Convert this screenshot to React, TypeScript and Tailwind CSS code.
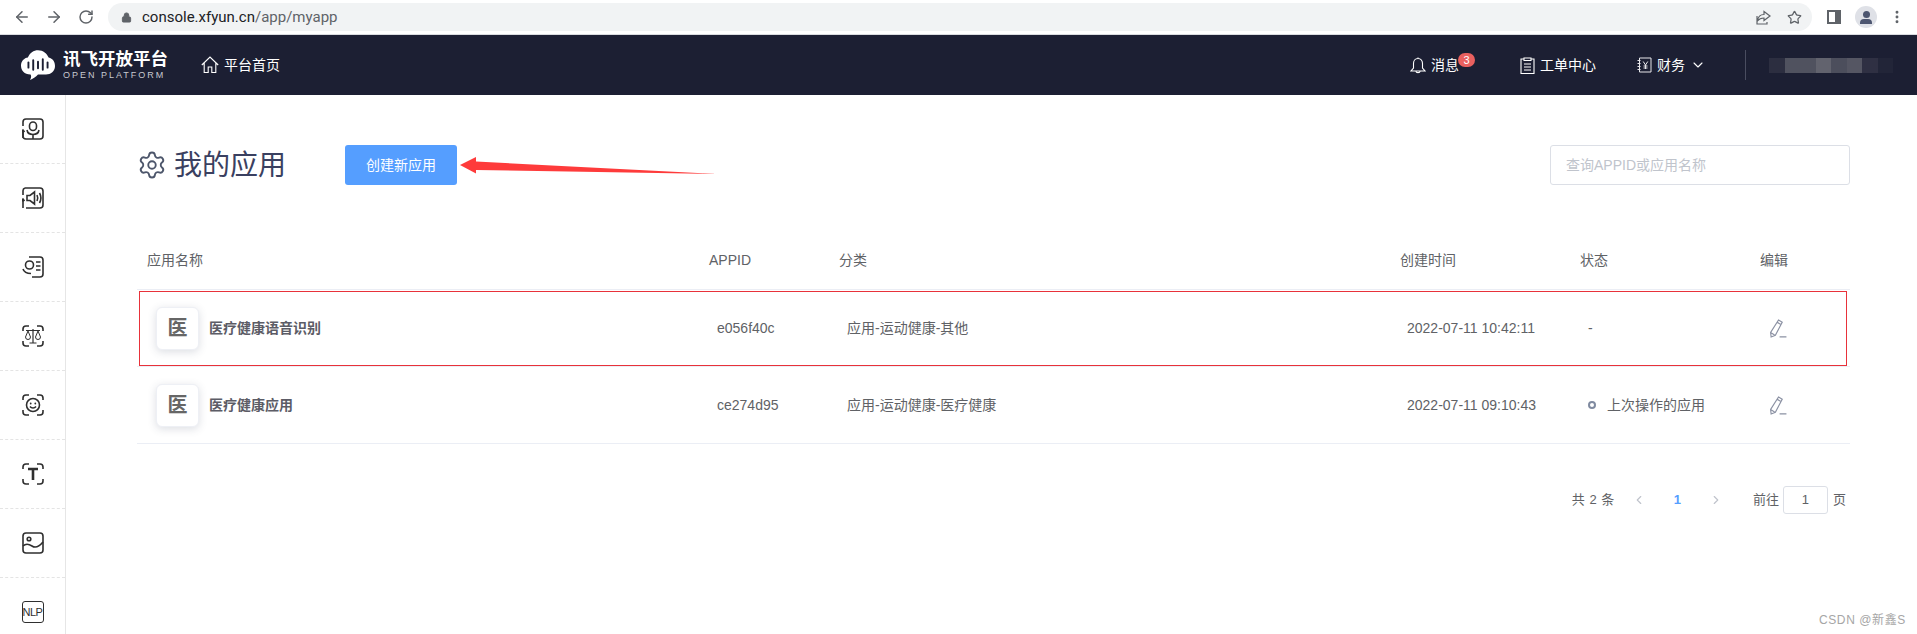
import { ArrowLeft, ArrowRight, RotateCw, Lock, Star, MoreVertical, ChevronDown, ChevronLeft, ChevronRight, Settings } from 'lucide-react';

const COLS = 'grid grid-cols-[562px_130px_561px_180px_180px_100px]';

function Cloud() {
  return (
    <svg width="38" height="34" viewBox="0 0 34 32" className="shrink-0">
      <path d="M10 25 C4 25 1 21 1 16.5 C1 12.5 4 9.5 7.5 9 C9 4.5 13 2 17 2 C22 2 25.5 5 27 9 C31 10 33 13 33 17 C33 22 29 25 24.5 25 L17 25 C15 27 12 29.5 9.5 30 C10.5 28.5 11 26.5 10 25 Z" fill="#fff" />
      <g stroke="#1c1f33" strokeWidth="1.8" strokeLinecap="round">
        <path d="M8 13.5v5M12.5 11.5v9M17 13v6M21.5 10.5v10M26 13.5v5" />
      </g>
    </svg>
  );
}

const iconProps = { width: 22, height: 22, viewBox: '0 0 22 22', fill: 'none', stroke: '#2f2f2f', strokeWidth: 1.6 };

function IconAsr() {
  return (
    <svg {...iconProps}>
      <path d="M4 1h14a3 3 0 0 1 3 3v14a3 3 0 0 1-3 3H4a3 3 0 0 1-3-3v-5" />
      <path d="M1 8V4a3 3 0 0 1 3-3" />
      <path d="M1 20v-8M-0.5 14L1 12l1.5 2" />
      <rect x="7.5" y="4" width="7" height="8.5" rx="3.5" />
      <path d="M5 12c.5 3 3 4.5 6 4.5s5.5-1.5 6-4.5M11 16.5V21" />
    </svg>
  );
}

function IconTts() {
  return (
    <svg {...iconProps}>
      <path d="M3 1h15a3 3 0 0 1 3 3v14a3 3 0 0 1-3 3H4" />
      <path d="M1 21v-9M-0.5 14L1 12l1.5 2M1 8V4a3 3 0 0 1 2-3" />
      <path d="M5 8.5h3L12.5 5v12L8 13.5H5z" />
      <path d="M15 8c1 2 1 4 0 6M17.5 6c1.7 3 1.7 7 0 10" />
    </svg>
  );
}

function IconRead() {
  return (
    <svg {...iconProps}>
      <path d="M7 1h11a3 3 0 0 1 3 3v14a3 3 0 0 1-3 3H10" />
      <circle cx="7.5" cy="9" r="4" />
      <path d="M1 13c1 3 4 4.5 8 4.5M14 6h4.5M14 10h4.5M14 14h4.5" />
    </svg>
  );
}

function Corners({ children }: { children: React.ReactNode }) {
  return (
    <svg {...iconProps}>
      <path d="M1 6V4a3 3 0 0 1 3-3h3M15 1h3a3 3 0 0 1 3 3v2M21 16v2a3 3 0 0 1-3 3h-3M7 21H4a3 3 0 0 1-3-3v-2" />
      {children}
    </svg>
  );
}

function IconScale() {
  return (
    <Corners>
      <path d="M4 5.500h14M11 4v14M7.500 18h7" strokeWidth="1.2" />
      <path d="M6 6l-2.500 6a2.500 2.500 0 0 0 5 0zM16 6l-2.500 6a2.500 2.500 0 0 0 5 0z" strokeWidth="1" />
    </Corners>
  );
}

function IconFace() {
  return (
    <Corners>
      <circle cx="11" cy="11" r="6.500" />
      <circle cx="8.700" cy="9.500" r=".9" fill="#2f2f2f" stroke="none" />
      <circle cx="13.300" cy="9.500" r=".9" fill="#2f2f2f" stroke="none" />
      <path d="M8 12.500c1.500 2 4.500 2 6 0" />
    </Corners>
  );
}

function IconText() {
  return (
    <Corners>
      <path d="M6 6h10M11 6v11" strokeWidth="2.600" />
    </Corners>
  );
}

function IconImage() {
  return (
    <svg {...iconProps}>
      <rect x="1" y="1" width="20" height="20" rx="3" />
      <circle cx="7" cy="7" r="1.800" />
      <path d="M1 14c3-3 6-2 9 0s6 2 11-4" />
    </svg>
  );
}

function IconNlp() {
  return (
    <div className="w-[22px] h-[22px] border-[1.500px] border-[#2f2f2f] rounded-[3px] flex items-center justify-center text-[11px] text-[#2f2f2f] tracking-[-0.5px] leading-none">
      NLP
    </div>
  );
}

function IconHome() {
  return (
    <svg width="18" height="18" viewBox="0 0 18 18" fill="none" stroke="#fff" strokeWidth="1.100">
      <path d="M.8 9L9 1l8.200 8M3.200 7v9.500h4V11h3.600v5.500h4V7" />
    </svg>
  );
}

function IconBell() {
  return (
    <svg width="16" height="17" viewBox="0 0 16 17" fill="none" stroke="#fff" strokeWidth="1.100">
      <path d="M8 1.500c-3 0-4.500 2.300-4.500 5v4.500L1 14h14l-2.500-3V6.500c0-2.700-1.500-5-4.500-5zM6 14.500c0 1.500 4 1.500 4 0M8 .5v1" />
    </svg>
  );
}

function IconTicket() {
  return (
    <svg width="15" height="17" viewBox="0 0 15 17" fill="none" stroke="#fff" strokeWidth="1.100">
      <path d="M4 2H1v14.500h13V2h-3M4 1h7v2.500H4zM4 7h7M4 10h7M4 13h7" />
    </svg>
  );
}

function IconFinance() {
  return (
    <svg width="15" height="16" viewBox="0 0 15 16" fill="none" stroke="#e6e6ea" strokeWidth="1">
      <path d="M2.500 1H14v14H2.500zM.5 3.500h3M.5 6.500h3M.5 9.500h3M.5 12.500h3" />
      <path d="M6.200 4.500L8.500 8l2.300-3.500M8.500 8v4M6.500 9h4M6.500 11h4" />
    </svg>
  );
}

function IconEdit() {
  return (
    <svg width="18" height="19" viewBox="0 0 17 18" fill="none" stroke="#8b91a3" strokeWidth="1.100">
      <path d="M9 1l3.500 2L6 15.500 2 17l-.5-4.300zM7.800 3.200l3.500 2M1.800 13l3.500 2.200M10 17h6.500" />
    </svg>
  );
}

const rows = [
  { name: '医疗健康语音识别', appid: 'e056f40c', cat: '应用-运动健康-其他', time: '2022-07-11 10:42:11', status: '-', marked: true },
  { name: '医疗健康应用', appid: 'ce274d95', cat: '应用-运动健康-医疗健康', time: '2022-07-11 09:10:43', status: '上次操作的应用', marked: false },
];

const blurBlocks = ['#2c2e40', '#50525f', '#50525f', '#62636e', '#4c4e5c', '#555663', '#2f3043', '#222538'];

export default function App() {
  return (
    <div className="relative w-[1917px] h-[634px] overflow-hidden bg-white text-[14px] text-[#606266] [font-family:'Liberation_Sans','Noto_Sans_CJK_SC',sans-serif]">
      {/* Browser bar */}
      <div className="h-[35px] bg-white border-b border-[#dadce0] flex items-center pl-[13px] pr-[12px]">
        <ArrowLeft size={18} color="#5f6368" strokeWidth={2} />
        <ArrowRight size={18} color="#5f6368" strokeWidth={2} className="ml-[14px]" />
        <RotateCw size={16} color="#5f6368" strokeWidth={2.200} className="ml-[15px]" />
        <div className="ml-[14px] flex-1 h-[28px] rounded-full bg-[#f1f3f4] flex items-center pl-[13px] pr-[10px]">
          <Lock size={11} color="#5f6368" fill="#5f6368" />
          <span className="ml-[10px] text-[15px] text-[#202124] [font-family:Roboto,sans-serif]">
            console.xfyun.cn<span className="text-[#5f6368]">/app/myapp</span>
          </span>
          <div className="ml-auto flex items-center gap-[16px]">
            <svg width="15" height="15" viewBox="0 0 15 15" fill="none" stroke="#5f6368" strokeWidth="1.200">
              <path d="M8 1.500l6 4.500-6 4.500V8C5 8 3 9 1.500 11 2 7 4.500 4.500 8 4.500zM1 6v8h10v-2" />
            </svg>
            <Star size={15} color="#5f6368" strokeWidth={2} />
          </div>
        </div>
        <div className="ml-[15px] w-[14px] h-[14px] border-[2px] border-[#5f6368] border-r-[6px] bg-white" />
        <div className="ml-[14px] w-[22px] h-[22px] rounded-full bg-[#dfe1e7] flex flex-col items-center justify-center overflow-hidden">
          <div className="w-[7px] h-[7px] rounded-full bg-[#4d5670]" />
          <div className="mt-[1px] w-[12px] h-[5px] rounded-t-[4px] bg-[#4d5670]" />
        </div>
        <MoreVertical size={16} color="#5f6368" strokeWidth={2.400} className="ml-[12px]" />
      </div>

      {/* Top nav */}
      <div className="h-[60px] bg-[#1c1f33] flex items-center text-white">
        <div className="ml-[19px] flex items-center">
          <Cloud />
          <div className="ml-[6px] flex flex-col">
            <span className="text-[17.500px] font-bold leading-[18px]">讯飞开放平台</span>
            <span className="text-[9px] leading-[10px] tracking-[2px] text-[#c8c9d0] mt-[2px]">OPEN PLATFORM</span>
          </div>
        </div>
        <div className="ml-[33px] flex items-center gap-[5px]">
          <IconHome />
          <span>平台首页</span>
        </div>
        <div className="ml-auto flex items-center">
          <IconBell />
          <span className="ml-[5px]">消息</span>
          <span className="relative -top-[5px] -ml-[1px] w-[17px] h-[14px] rounded-full bg-[#e9605f] text-[11px] leading-[14px] text-center">3</span>
          <div className="ml-[45px]"><IconTicket /></div>
          <span className="ml-[5px]">工单中心</span>
          <div className="ml-[41px]"><IconFinance /></div>
          <span className="ml-[5px]">财务</span>
          <ChevronDown size={16} color="#fff" strokeWidth={1.600} className="ml-[5px]" />
          <div className="ml-[39px] w-px h-[30px] bg-[#4a4d60]" />
          <div className="ml-[23px] mr-[24px] flex h-[15px]">
            {blurBlocks.map((c, i) => (
              <div key={i} className="w-[15.500px] h-full" style={{ backgroundColor: c }} />
            ))}
          </div>
        </div>
      </div>

      <div className="flex h-[539px]">
        {/* Sidebar */}
        <div className="w-[66px] shrink-0 border-r border-[#e6e6e6] overflow-hidden">
          {[<IconAsr />, <IconTts />, <IconRead />, <IconScale />, <IconFace />, <IconText />, <IconImage />, <IconNlp />].map((icon, i) => (
            <div key={i} className="h-[69px] border-b border-dashed border-[#e4e4e4] flex items-center justify-center">
              {icon}
            </div>
          ))}
        </div>

        {/* Main */}
        <div className="flex-1 pl-[71px] pr-[67px] pt-[50px]">
          <div className="flex items-center h-[40px]">
            <Settings size={30} color="#4d566b" strokeWidth={1.500} />
            <h1 className="ml-[7px] pt-[2px] text-[28px] leading-none text-[#3a4060]">我的应用</h1>
            <div className="relative ml-[59px]">
              <button className="w-[112px] h-[40px] rounded-[3px] bg-[#559eff] text-white text-[14px]">创建新应用</button>
              <svg width="258" height="22" viewBox="0 0 258 22" className="absolute left-[115px] top-[11px]">
                <polygon points="0,9 16,1 16,5.500 257,18 16,14 16,17.500" fill="#fe3b3b" />
              </svg>
            </div>
            <input
              placeholder="查询APPID或应用名称"
              className="ml-auto w-[300px] h-[40px] border border-[#dcdfe6] rounded-[3px] px-[15px] text-[14px] placeholder:text-[#c0c4cc] outline-none"
            />
          </div>

          {/* Table */}
          <div className={`${COLS} mt-[44px] h-[61px] items-center border-b border-[#ebeef5] pt-[3px] text-[14px]`}>
            <div className="pl-[10px]">应用名称</div>
            <div className="pl-[10px]">APPID</div>
            <div className="pl-[10px]">分类</div>
            <div className="pl-[10px]">创建时间</div>
            <div className="pl-[10px]">状态</div>
            <div className="pl-[10px]">编辑</div>
          </div>
          {rows.map((r) => (
            <div key={r.appid} className={`relative ${COLS} h-[77px] items-center border-b border-[#ebeef5] text-[14px]`}>
              <div className="pl-[19px] flex items-center">
                <div className="w-[43px] h-[43px] rounded-[6px] bg-white border border-[#eef0f5] shadow-[0_2px_8px_rgba(60,70,100,0.18)] flex items-center justify-center text-[20px] font-bold text-[#666]">
                  医
                </div>
                <span className="ml-[10px] font-bold text-[14px] text-[#5c5c66]">{r.name}</span>
              </div>
              <div className="pl-[18px]">{r.appid}</div>
              <div className="pl-[18px]">{r.cat}</div>
              <div className="pl-[17px]">{r.time}</div>
              <div className="pl-[18px] flex items-center">
                {!r.marked && <span className="w-[8px] h-[8px] rounded-full border-[2px] border-[#7f8aa0] mr-[11px]" />}
                <span>{r.status}</span>
              </div>
              <div className="pl-[19px]"><IconEdit /></div>
              {r.marked && <div className="absolute left-[2px] right-[3px] top-[1px] bottom-0 border border-[#e8323a]" />}
            </div>
          ))}

          {/* Pagination */}
          <div className="mt-[42px] h-[28px] flex items-center text-[13px]">
            <span className="ml-auto tracking-[0.5px]">共 2 条</span>
            <ChevronLeft size={14} color="#c0c4cc" strokeWidth={2} className="ml-[17px]" />
            <span className="ml-[28px] font-bold text-[#559eff]">1</span>
            <ChevronRight size={14} color="#c0c4cc" strokeWidth={2} className="ml-[28px]" />
            <span className="ml-[30px]">前往</span>
            <div className="ml-[4px] w-[45px] h-[28px] border border-[#dcdfe6] rounded-[3px] flex items-center justify-center">1</div>
            <span className="ml-[5px] mr-[4px]">页</span>
          </div>
        </div>
      </div>

      {/* Watermark */}
      <div className="absolute left-[1819px] top-[611px] text-[12px] text-[#a6a6a6] tracking-[0.6px]">CSDN @新鑫S</div>
    </div>
  );
}
